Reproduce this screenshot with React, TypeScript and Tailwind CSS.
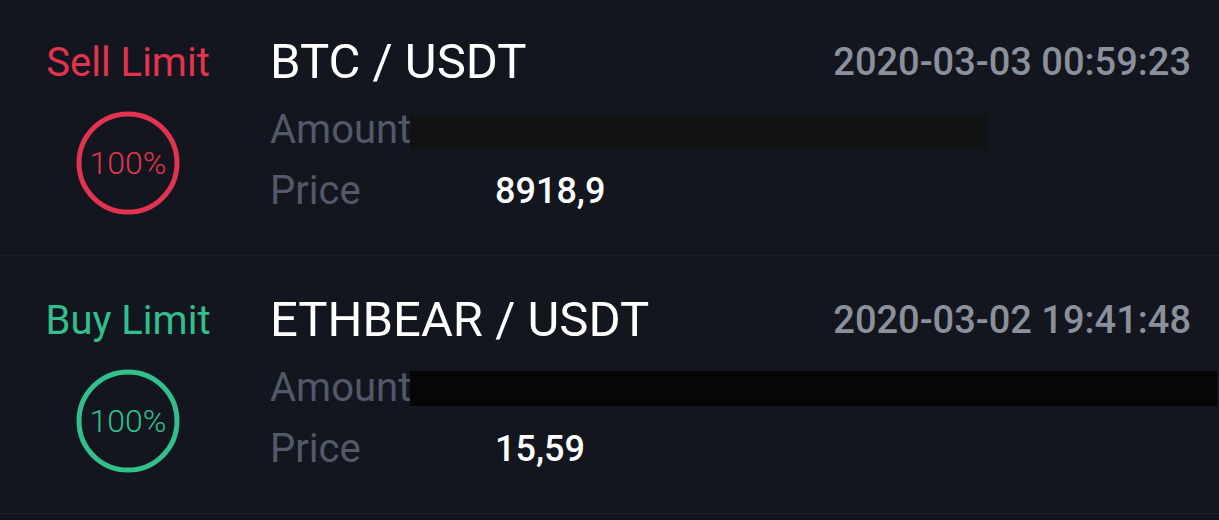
import React from "react";

type Order = {
  side: string;
  color: string;
  pair: string;
  time: string;
  price: string;
  barWidth: string;
  barColor: string;
  barTop: string;
};

const orders: Order[] = [
  {
    side: "Sell Limit",
    color: "#e2344f",
    pair: "BTC / USDT",
    time: "2020-03-03 00:59:23",
    price: "8918,9",
    barWidth: "w-[578px]",
    barColor: "bg-[#111214]",
    barTop: "mt-[5px]",
  },
  {
    side: "Buy Limit",
    color: "#31c08b",
    pair: "ETHBEAR / USDT",
    time: "2020-03-02 19:41:48",
    price: "15,59",
    barWidth: "w-[807px]",
    barColor: "bg-[#060608]",
    barTop: "mt-[3px]",
  },
];

const Ring = ({ color }: { color: string }) => (
  <div className="relative w-[104px] h-[104px] flex items-center justify-center">
    <svg width="104" height="104" viewBox="0 0 104 104" className="absolute inset-0">
      <circle cx="52" cy="52" r="49" fill="none" stroke={color} strokeWidth="5" />
    </svg>
    <span className="text-[32px] font-light leading-none" style={{ color }}>
      100%
    </span>
  </div>
);

const OrderRow = ({ o }: { o: Order }) => (
  <div className="flex h-[258px] border-b border-[#1c2029]">
    <div className="w-[256px] shrink-0 flex flex-col items-center pt-[45px]">
      <p className="text-[40px] leading-none" style={{ color: o.color }}>
        {o.side}
      </p>
      <div className="mt-[28px]">
        <Ring color={o.color} />
      </div>
    </div>
    <div className="flex-1 min-w-0 flex flex-col pl-[14px] pr-[28px] pt-[39px]">
      <div className="flex justify-between items-start">
        <p className="text-[49px] leading-none text-white">{o.pair}</p>
        <p className="text-[38px] leading-none font-medium text-[#8a909c] mt-[6px]">{o.time}</p>
      </div>
      <div className="flex items-start mt-[24px] whitespace-nowrap">
        <p className="text-[40px] leading-none text-[#525968] w-[140px] shrink-0">Amount</p>
        <div className={`${o.barWidth} ${o.barColor} ${o.barTop} h-[35px] shrink-0`} />
      </div>
      <div className="flex items-start mt-[21px]">
        <p className="text-[40px] leading-none text-[#525968] w-[225px] shrink-0">Price</p>
        <p className="text-[36px] leading-none font-medium text-white mt-[2px]">{o.price}</p>
      </div>
    </div>
  </div>
);

export default function App() {
  return (
    <div
      className="w-[1219px] h-[520px] overflow-hidden bg-[#13161f]"
      style={{ fontFamily: "Roboto, 'Liberation Sans', sans-serif" }}
    >
      <div className="-mt-[2px]">
        {orders.map((o) => (
          <OrderRow key={o.pair} o={o} />
        ))}
      </div>
    </div>
  );
}
